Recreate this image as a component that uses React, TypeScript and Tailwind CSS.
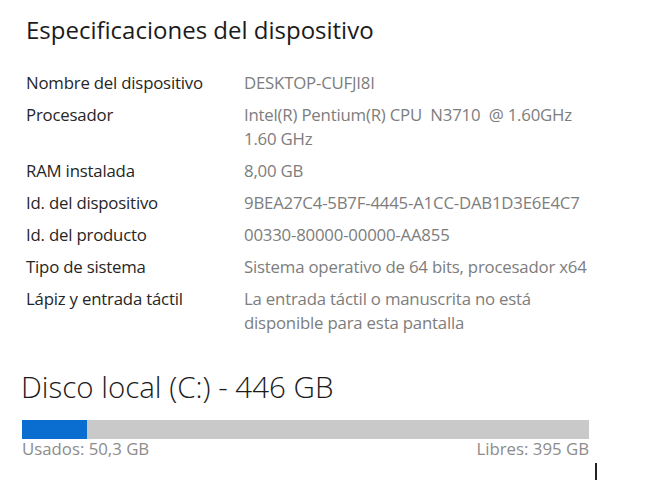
const specs: { label: string; value: string[] }[] = [
  { label: "Nombre del dispositivo", value: ["DESKTOP-CUFJI8I"] },
  {
    label: "Procesador",
    value: ["Intel(R) Pentium(R) CPU  N3710  @ 1.60GHz", "1.60 GHz"],
  },
  { label: "RAM instalada", value: ["8,00 GB"] },
  { label: "Id. del dispositivo", value: ["9BEA27C4-5B7F-4445-A1CC-DAB1D3E6E4C7"] },
  { label: "Id. del producto", value: ["00330-80000-00000-AA855"] },
  { label: "Tipo de sistema", value: ["Sistema operativo de 64 bits, procesador x64"] },
  {
    label: "Lápiz y entrada táctil",
    value: ["La entrada táctil o manuscrita no está", "disponible para esta pantalla"],
  },
];

export default function App() {
  const usedPct = (50.3 / 446) * 100 + 0.2;

  return (
    <div className="w-[650px] h-[500px] bg-white font-['Open_Sans',sans-serif] overflow-hidden">
      <div className="pl-[26px] pt-[14px]">
        <h1 className="text-[24px] leading-[32px] text-[#1b1b1b] tracking-[0px]">
          Especificaciones del dispositivo
        </h1>
        <div className="mt-[25px] flex flex-col gap-2">
          {specs.map((row) => (
            <div key={row.label} className="flex text-[16.8px] leading-6 tracking-[-0.2px]">
              <div className="w-[218px] shrink-0 text-[#262626]">{row.label}</div>
              <div className="text-[#7d7d7d] whitespace-pre">
                {row.value.map((line) => (
                  <div key={line}>{line}</div>
                ))}
              </div>
            </div>
          ))}
        </div>
      </div>

      <div className="pl-[21px] mt-[32px] w-[589px]">
        <h2 className="text-[29.5px] leading-[40px] font-light text-[#1b1b1b]">
          Disco local (C:) - 446 GB
        </h2>
        <div className="ml-[1px] mt-[13px] h-[19px] bg-[#c9c9c9] flex">
          <div className="h-full bg-[#0a6ed1]" style={{ width: `${usedPct}%` }} />
        </div>
        <div className="ml-[1px] mt-[0px] flex justify-between text-[16.8px] leading-5 text-[#8c8c8c]">
          <span>Usados: 50,3 GB</span>
          <span>Libres: 395 GB</span>
        </div>
      </div>
      <div className="ml-[595px] mt-[4px] w-[1.5px] h-[17px] bg-[#222]" />
    </div>
  );
}
